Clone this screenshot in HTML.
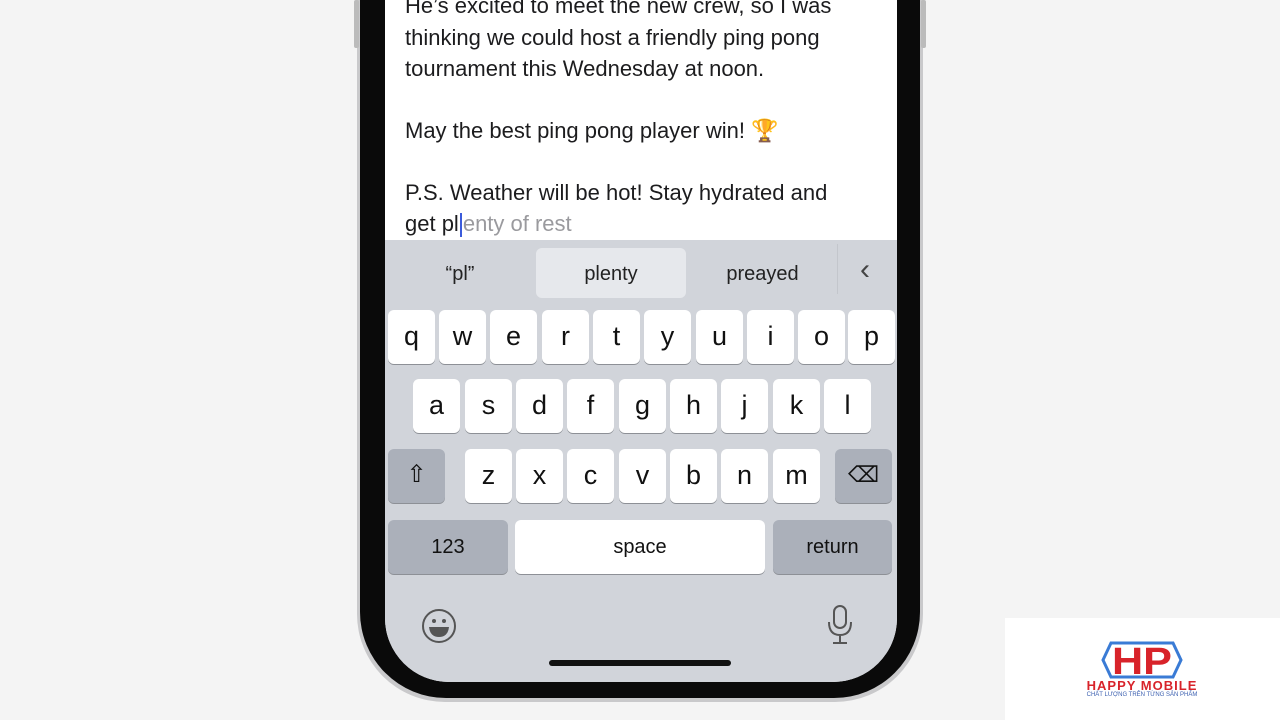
<!DOCTYPE html>
<html><head><style>
body{margin:0;width:1280px;height:720px;background:#f4f4f4;position:relative;overflow:hidden;font-family:"Liberation Sans",sans-serif}
.frame{position:absolute;left:357px;top:-60px;width:566px;height:762px;border-radius:0 0 88px 88px;background:#c9c9cb;}
.frame2{position:absolute;left:360px;top:-60px;width:560px;height:758px;border-radius:0 0 86px 86px;background:#0a0a0a;}
.screen{position:absolute;left:385px;top:-60px;width:512px;height:742px;border-radius:0 0 64px 64px;background:#fff;overflow:hidden}
.txt{position:absolute;left:20px;font-size:22px;color:#1c1c1e;white-space:nowrap;line-height:31px}
.kb{position:absolute;left:0;top:300px;width:512px;height:442px;background:#d1d4da}
.k{position:absolute;width:47px;height:54px;background:#fff;border-radius:6px;box-shadow:0 1px 0 #8d9096;font-size:27px;text-align:center;line-height:52px;color:#111}
.g{background:#abb0ba}
.sug{position:absolute;top:5px;height:58px;line-height:58px;font-size:20px;color:#222;text-align:center}
</style></head><body>
<div class="frame"></div><div class="frame2"></div>
<div style="position:absolute;left:354px;top:0;width:5px;height:48px;background:#bbb;border-radius:2px"></div>
<div style="position:absolute;left:921px;top:0;width:5px;height:48px;background:#bbb;border-radius:2px"></div>
<div class="screen">
<div class="txt" style="top:50px">He’s excited to meet the new crew, so I was</div>
<div class="txt" style="top:82px">thinking we could host a friendly ping pong</div>
<div class="txt" style="top:113px">tournament this Wednesday at noon.</div>
<div class="txt" style="top:175px">May the best ping pong player win! <span style="color:#d4a017">🏆</span></div>
<div class="txt" style="top:237px">P.S. Weather will be hot! Stay hydrated and</div>
<div class="txt" style="top:268px">get pl<span style="display:inline-block;width:2px;height:24px;background:#3b5bdb;vertical-align:middle;margin:0 1px"></span><span style="color:#9a9a9e">enty of rest</span></div>
<div class="kb">
 <div class="sug" style="left:20px;width:110px">“pl”</div>
 <div style="position:absolute;left:151px;top:8px;width:150px;height:50px;background:#e6e8ec;border-radius:6px"></div>
 <div class="sug" style="left:151px;width:150px">plenty</div>
 <div class="sug" style="left:320px;width:115px">preayed</div>
 <div style="position:absolute;left:452px;top:4px;width:1px;height:50px;background:#c3c6cc"></div>
 <div class="sug" style="left:460px;width:40px;font-size:30px;color:#444;top:1px">&lsaquo;</div>
 <div class="k" style="left:3px;top:70px">q</div><div class="k" style="left:54px;top:70px">w</div><div class="k" style="left:105px;top:70px">e</div><div class="k" style="left:157px;top:70px">r</div><div class="k" style="left:208px;top:70px">t</div><div class="k" style="left:259px;top:70px">y</div><div class="k" style="left:311px;top:70px">u</div><div class="k" style="left:362px;top:70px">i</div><div class="k" style="left:413px;top:70px">o</div><div class="k" style="left:463px;top:70px">p</div>
 <div class="k" style="left:28px;top:139px">a</div><div class="k" style="left:80px;top:139px">s</div><div class="k" style="left:131px;top:139px">d</div><div class="k" style="left:182px;top:139px">f</div><div class="k" style="left:234px;top:139px">g</div><div class="k" style="left:285px;top:139px">h</div><div class="k" style="left:336px;top:139px">j</div><div class="k" style="left:388px;top:139px">k</div><div class="k" style="left:439px;top:139px">l</div>
 <div class="k g" style="left:3px;top:209px;width:57px;font-size:24px">⇧</div>
 <div class="k" style="left:80px;top:209px">z</div><div class="k" style="left:131px;top:209px">x</div><div class="k" style="left:182px;top:209px">c</div><div class="k" style="left:234px;top:209px">v</div><div class="k" style="left:285px;top:209px">b</div><div class="k" style="left:336px;top:209px">n</div><div class="k" style="left:388px;top:209px">m</div>
 <div class="k g" style="left:450px;top:209px;width:57px;font-size:22px">⌫</div>
 <div class="k g" style="left:3px;top:280px;width:120px;font-size:20px;line-height:54px">123</div>
 <div class="k" style="left:130px;top:280px;width:250px;font-size:20px;line-height:54px">space</div>
 <div class="k g" style="left:388px;top:280px;width:119px;font-size:20px;line-height:54px">return</div>
 <svg style="position:absolute;left:36px;top:368px" width="36" height="36" viewBox="0 0 36 36"><circle cx="18" cy="18" r="16" fill="none" stroke="#555" stroke-width="2"/><circle cx="13" cy="13" r="2" fill="#555"/><circle cx="23" cy="13" r="2" fill="#555"/><path d="M8 19 H28 Q27 29 18 29 Q9 29 8 19Z" fill="#555"/></svg>
 <svg style="position:absolute;left:440px;top:364px" width="30" height="42" viewBox="0 0 30 42"><rect x="9" y="2" width="12" height="22" rx="6" fill="none" stroke="#555" stroke-width="2"/><path d="M4 18 Q4 31 15 31 Q26 31 26 18 M15 31 V39 M8 39 H22" fill="none" stroke="#555" stroke-width="2"/></svg>
 <div style="position:absolute;left:164px;top:420px;width:182px;height:6px;background:#111;border-radius:3px"></div>
</div>
</div>
<div style="position:absolute;left:1005px;top:618px;width:275px;height:102px;background:#fff"></div>
<svg style="position:absolute;left:1101px;top:641px" width="82" height="38" viewBox="0 0 82 38"><polygon points="10,2 72,2 80,19 72,36 10,36 2,19" fill="none" stroke="#3a7bd5" stroke-width="3"/><text x="41" y="33" text-anchor="middle" font-family="Liberation Sans" font-weight="bold" font-size="38" fill="#d8232a" textLength="60" lengthAdjust="spacingAndGlyphs">HP</text></svg>
<div style="position:absolute;left:1062px;top:679px;width:160px;text-align:center;font-size:13px;line-height:13px;font-weight:bold;color:#d8232a;letter-spacing:1px">HAPPY MOBILE</div>
<div style="position:absolute;left:1062px;top:692px;width:160px;text-align:center;font-size:6px;color:#3a5fb0">CHẤT LƯỢNG TRÊN TỪNG SẢN PHẨM</div>
</body></html>
